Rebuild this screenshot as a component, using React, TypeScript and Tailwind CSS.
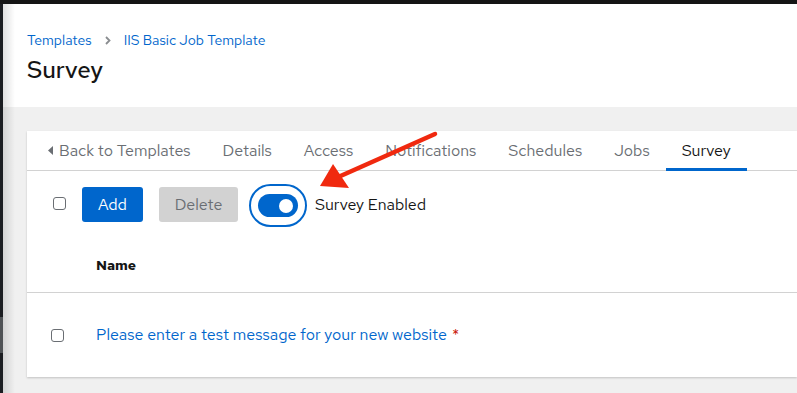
import React from "react";

const font = { fontFamily: '"Red Hat Text", Inter, "Noto Sans", sans-serif' };

function Checkbox() {
  return <div className="w-[13px] h-[13px] rounded-[3px] border border-[#6a6e73] bg-white" />;
}

export default function App() {
  const tabs = ["Details", "Access", "Notifications", "Schedules", "Jobs"];
  return (
    <div className="w-[797px] h-[393px] overflow-hidden bg-[#151515] flex flex-col relative" style={font}>
      <div className="h-[4px] shrink-0 bg-[#151515]" />
      <div className="flex flex-1 min-h-0">
        <div className="w-[3px] shrink-0 bg-[#1b1d21] flex flex-col">
          <div className="h-[57px]" />
          <div className="h-[200px]" />
          <div className="h-[56px]" />
          <div className="h-[36px] bg-[#4f5255]" />
        </div>
        <div className="flex-1 flex flex-col bg-[#f0f0f0] relative">
          <div className="h-[103px] shrink-0 bg-white pl-[24px] pt-[27px]">
            <div className="flex items-center text-[14px] text-[#0066cc] leading-[18px]">
              <span>Templates</span>
              <svg className="mx-[13px]" width="6" height="9" viewBox="0 0 6 9"><path d="M1 1l3.5 3.5L1 8" stroke="#8a8d90" strokeWidth="1.8" fill="none" /></svg>
              <span>IIS Basic Job Template</span>
            </div>
            <div className="mt-[6px] text-[24px] font-medium text-[#151515] leading-[30px]">Survey</div>
          </div>
          <div className="pl-[24px] pt-[24px] flex-1">
            <div className="bg-white shadow-[0_1px_2px_rgba(0,0,0,0.2)] h-[246px]">
              <div className="h-[40px] border-b border-[#d2d2d2] flex items-stretch pl-[21px] text-[16px] text-[#6a6e73]">
                <div className="flex items-center pr-[16px]">
                  <svg width="5" height="9" viewBox="0 0 5 9" className="mr-[6px]"><path d="M5 0L0 4.5 5 9z" fill="#6a6e73" /></svg>
                  <span>Back to Templates</span>
                </div>
                {tabs.map((t) => (
                  <div key={t} className="flex items-center px-[16px]">{t}</div>
                ))}
                <div className="flex items-center px-[16px] text-[#151515] relative">
                  Survey
                  <div className="absolute left-0 right-0 bottom-[-1px] h-[3px] bg-[#0066cc]" />
                </div>
              </div>
              <div className="h-[81px] flex items-start pt-[16px]">
                <div className="pl-[26px] pr-[16px] pt-[10px]"><Checkbox /></div>
                <div className="h-[35px] w-[61px] bg-[#0066cc] rounded-[3px] text-white text-[16px] flex items-center justify-center">Add</div>
                <div className="ml-[16px] h-[35px] w-[79px] bg-[#d2d2d2] rounded-[3px] text-[#6a6e73] text-[16px] flex items-center justify-center">Delete</div>
                <div className="ml-[11px] -mt-[3px] w-[58px] h-[43px] rounded-full border-2 border-[#0066cc] flex items-center justify-center">
                  <div className="w-[40px] h-[23px] rounded-full bg-[#0066cc] flex items-center justify-end pr-[5px]">
                    <div className="w-[14px] h-[14px] rounded-full bg-white" />
                  </div>
                </div>
                <div className="ml-[8px] text-[16px] text-[#151515] leading-[35px]">Survey Enabled</div>
              </div>
              <div className="h-[41px] border-b border-[#d2d2d2] flex items-start pt-[4px] pl-[69px] text-[14px] leading-[18px] font-bold text-[#151515]">Name</div>
              <div className="h-[84px] flex items-center">
                <div className="pl-[24px] pr-[32px]"><Checkbox /></div>
                <span className="text-[16px] text-[#0066cc]">Please enter a test message for your new website</span>
                <span className="ml-[5px] text-[16px] text-[#c9190b]">*</span>
              </div>
            </div>
          </div>
          <div className="absolute left-0 top-0 bottom-0 w-[12px] bg-gradient-to-r from-[rgba(0,0,0,0.12)] to-transparent pointer-events-none" />
        </div>
      </div>
      <svg className="absolute left-0 top-0 pointer-events-none" width="797" height="393" viewBox="0 0 797 393">
        <line x1="435" y1="134" x2="336" y2="178" stroke="#f0290f" strokeWidth="4.5" strokeLinecap="round" />
        <polygon points="320,186 333,164 349,188" fill="#f0290f" />
      </svg>
    </div>
  );
}
